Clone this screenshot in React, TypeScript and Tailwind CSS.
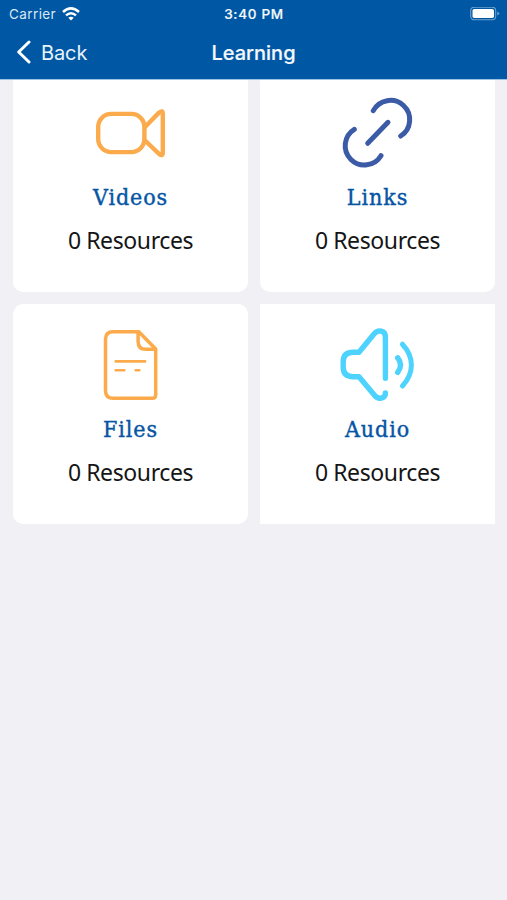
import type { ReactNode } from 'react';

function VideoIcon() {
  return (
    <svg width="80" height="80" viewBox="0.5 0 80 80" fill="none" stroke="#fbab4b" strokeWidth="4.4" strokeLinecap="round" strokeLinejoin="round">
      <rect x="7.7" y="20.9" width="46.2" height="38.2" rx="13" />
      <path d="M54.5 34 L68.5 19.6 Q72.3 16.5 72.3 21 V59.5 Q72.3 64 68.5 60.8 L54.5 47.5" />
    </svg>
  );
}

function LinkIcon() {
  return (
    <svg width="80" height="80" viewBox="0.5 0 80 80" fill="none" stroke="#3c5ba6" strokeWidth="5" strokeLinecap="round">
      <path d="M35.8 17.7 A19.3 19.3 0 1 1 63.2 43" />
      <path d="M16.8 36.3 A19.3 19.3 0 1 0 43.5 62.7" />
      <path d="M30.2 50.3 L50.5 29.3" />
    </svg>
  );
}

function FileIcon() {
  return (
    <svg width="80" height="80" viewBox="0.7 0 80 80" fill="none" stroke="#fbab4b" strokeWidth="3.5" strokeLinecap="round" strokeLinejoin="round">
      <path d="M48.5 6.8 H23 Q15.2 6.8 15.2 14.5 V65.5 Q15.2 73.3 23 73.3 H62 Q65.4 73.3 65.4 70 V24 Z" />
      <path d="M47.8 7 V16.5 Q47.8 24.3 55.5 24.3 H65" />
      <path d="M25.4 36.4 H54.8 M25.4 45.3 H34 M45.4 45.3 H49" strokeWidth="2.6" />
    </svg>
  );
}

function AudioIcon() {
  return (
    <svg width="80" height="80" viewBox="0.8 0 80 80" fill="none" stroke="#4dd3fd" strokeWidth="5.4" strokeLinecap="round" strokeLinejoin="round">
      <path d="M48.2 53.3 V12 C48.2 5.5 41 4.2 37 8.8 L21.8 27.3 H16 Q6 27.3 6 37 V42.3 Q6 51.7 16 51.7 H21.8 L37.5 70.5 C41 74.8 48.2 74 48.2 68" />
      <path d="M60.5 32.8 Q66.2 40 60.5 47.3" />
      <path d="M65.2 19.2 C77.2 32 77.2 48 65.2 61" strokeWidth="5" />
    </svg>
  );
}

type CardProps = { title: string; icon: ReactNode; rounded?: boolean };

function ResourceCard({ title, icon, rounded = true }: CardProps) {
  return (
    <div className={`flex h-[220px] flex-col items-center bg-white pt-[21px] ${rounded ? 'rounded-[10px]' : ''}`}>
      {icon}
      <h2 className="mt-[8px] font-['DejaVu_Serif_Condensed','DejaVu_Serif',serif] text-[23px] leading-8 tracking-[0.9px] text-[#0655a4] [-webkit-text-stroke:0.4px_#0655a4]">{title}</h2>
      <p className="mt-[11px] font-['Noto_Sans',sans-serif] text-[23px] leading-8 tracking-[-0.4px] text-[#151515]">0 Resources</p>
    </div>
  );
}

export default function App() {
  return (
    <div className="flex h-[900px] w-[507px] flex-col overflow-hidden bg-[#f0f0f5]">
      <header className="z-10 h-[79px] shrink-0 bg-[#0057a3] font-['Inter',sans-serif] text-white">
        <div className="grid h-[27px] grid-cols-3 items-center pl-[8px] pr-[7px] text-[13px]">
          <div className="flex items-center gap-[6px] pl-px tracking-[0.4px] text-[#d9e8f5]">
            <span className="pt-px text-[13.5px]">Carrier</span>
            <svg width="18" height="14" viewBox="0 0 18 14" fill="none" stroke="white" strokeWidth="2.5">
              <path d="M1 5 Q9 -2.2 17 5" />
              <path d="M4 8.4 Q9 4.1 14 8.4" />
              <path d="M9 13.6 L6.3 10.8 Q9 8.7 11.7 10.8 Z" fill="white" stroke="none" />
            </svg>
          </div>
          <span className="pt-px text-center text-[13.5px] font-medium tracking-[0.7px] text-[#f3f9fd] [-webkit-text-stroke:0.2px_#f3f9fd]">3:40 PM</span>
          <svg className="justify-self-end" width="30" height="14" viewBox="0 0.5 30 14">
            <rect x="0.7" y="0.7" width="25" height="12.6" rx="3.5" fill="none" stroke="#6da3d0" strokeWidth="1.1" />
            <rect x="2.5" y="2.5" width="21.5" height="9" rx="1.8" fill="white" />
            <path d="M27.3 5 Q29.3 6 29.3 7 Q29.3 8 27.3 9 Z" fill="#6da3d0" />
          </svg>
        </div>
        <div className="grid h-[50px] grid-cols-3 items-center px-4 text-xl">
          <div className="flex items-center gap-[10px] text-[#e9f3fb]">
            <svg width="15" height="24" viewBox="0 0 15 24" fill="none" stroke="white" strokeWidth="3" strokeLinecap="round" strokeLinejoin="round">
              <path d="M13 2 L2.7 12 L13 22" />
            </svg>
            <span className="pt-[2px] tracking-[-0.1px]">Back</span>
          </div>
          <h1 className="pt-[2px] text-center font-medium text-[#f3f8fc] [-webkit-text-stroke:0.2px_#f3f8fc]">Learning</h1>
        </div>
      </header>
      <div className="z-10 h-px shrink-0 bg-[#9cc3e4]" />
      <main className="-mt-2 grid grid-cols-2 gap-3 pl-[13px] pr-[12px]">
        <ResourceCard title="Videos" icon={<VideoIcon />} />
        <ResourceCard title="Links" icon={<LinkIcon />} />
        <ResourceCard title="Files" icon={<FileIcon />} />
        <ResourceCard title="Audio" icon={<AudioIcon />} rounded={false} />
      </main>
    </div>
  );
}
